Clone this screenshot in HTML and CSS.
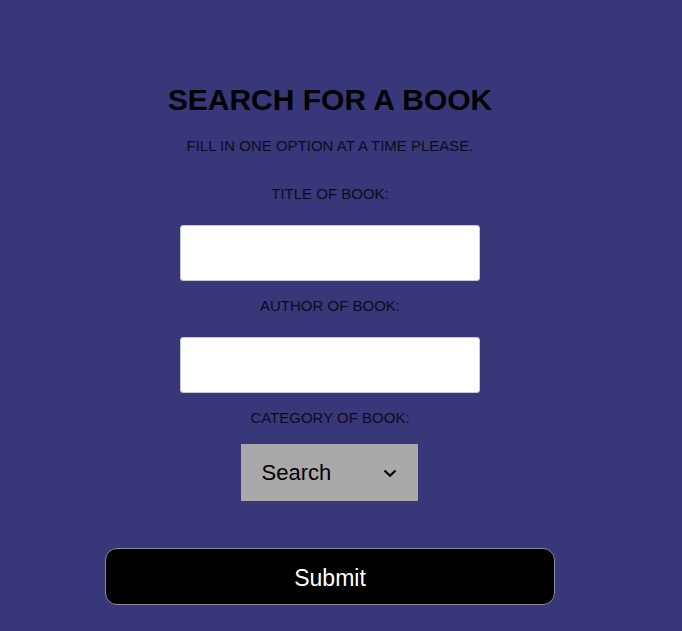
FILE: index.html
```html
<!DOCTYPE html>
<html>
<head>
<meta charset="utf-8">
<link rel="stylesheet" href="styles.css">
</head>
<body>
<main class="page">
  <form class="search-form">
    <h1 class="title">SEARCH FOR A BOOK</h1>
    <p class="subtitle">FILL IN ONE OPTION AT A TIME PLEASE.</p>
    <label class="label label-first">TITLE OF BOOK:</label>
    <input class="field" type="text">
    <label class="label">AUTHOR OF BOOK:</label>
    <input class="field" type="text">
    <label class="label">CATEGORY OF BOOK:</label>
    <div class="select">
      <span class="select-text">Search</span>
      <svg class="chevron" width="16" height="16" viewBox="0 0 16 16"><path d="M2.5 5.5 L8 10.8 L13.5 5.5" fill="none" stroke="#000" stroke-width="2.2"/></svg>
    </div>
    <button class="submit" type="button">Submit</button>
  </form>
</main>
</body>
</html>
```
FILE: styles.css
```css
html, body {
  margin: 0;
  padding: 0;
  background: #38377a;
  height: 100%;
}
body {
  font-family: "Liberation Sans", Arial, sans-serif;
  color: #0d0b1a;
}
.page {
  width: 660px;
  padding-top: 84px;
}
.search-form {
  display: flex;
  flex-direction: column;
  align-items: center;
}
.title {
  margin: 0;
  font-size: 30px;
  line-height: 32px;
  font-weight: bold;
  color: #000;
}
.subtitle {
  margin: 22px 0 0;
  font-size: 15px;
  line-height: 16px;
}
.label {
  display: block;
  margin-top: 17px;
  font-size: 15px;
  line-height: 16px;
}
.label-first {
  margin-top: 32px;
}
.field {
  margin-top: 23px;
  width: 300px;
  height: 56px;
  box-sizing: border-box;
  border: 1px solid #c8c8d8;
  border-radius: 3px;
  background: #fff;
  padding: 0 10px;
}
.select {
  margin-top: 18px;
  width: 177px;
  height: 57px;
  box-sizing: border-box;
  background: #a9a9a9;
  display: flex;
  align-items: center;
  justify-content: space-between;
  padding: 0 20px 0 21px;
  margin-right: 2px;
}
.select-text {
  font-size: 22px;
  color: #000;
}
.chevron {
  display: block;
}
.submit {
  margin-top: 47px;
  width: 450px;
  height: 57px;
  background: #000;
  color: #fff;
  border: 1px solid #8a8a9a;
  border-radius: 12px;
  font-family: "Liberation Sans", Arial, sans-serif;
  font-size: 23px;
  padding-top: 4px;
}
```
